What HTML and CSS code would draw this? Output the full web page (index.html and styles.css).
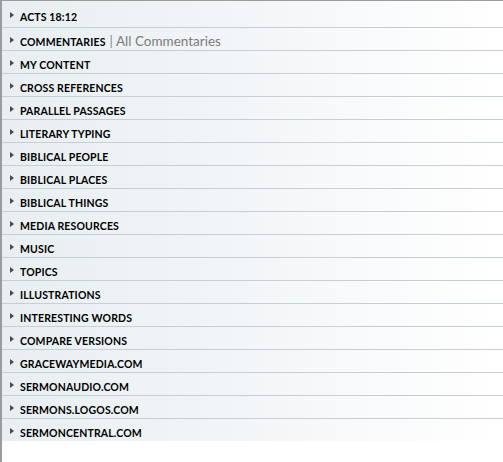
FILE: index.html
```html
<!DOCTYPE html>
<html>
<head>
<meta charset="utf-8">
<link rel="stylesheet" href="styles.css">
</head>
<body>
<div class="panel">
  <ul class="sections">
    <li class="row first"><span class="tri"></span><span class="label">ACTS 18:12</span></li>
    <li class="row"><span class="tri"></span><span class="label">COMMENTARIES</span><span class="sub"><span class="sep">|</span> All Commentaries</span></li>
    <li class="row"><span class="tri"></span><span class="label">MY CONTENT</span></li>
    <li class="row"><span class="tri"></span><span class="label">CROSS REFERENCES</span></li>
    <li class="row"><span class="tri"></span><span class="label">PARALLEL PASSAGES</span></li>
    <li class="row"><span class="tri"></span><span class="label">LITERARY TYPING</span></li>
    <li class="row"><span class="tri"></span><span class="label">BIBLICAL PEOPLE</span></li>
    <li class="row"><span class="tri"></span><span class="label">BIBLICAL PLACES</span></li>
    <li class="row"><span class="tri"></span><span class="label">BIBLICAL THINGS</span></li>
    <li class="row"><span class="tri"></span><span class="label">MEDIA RESOURCES</span></li>
    <li class="row"><span class="tri"></span><span class="label">MUSIC</span></li>
    <li class="row"><span class="tri"></span><span class="label">TOPICS</span></li>
    <li class="row"><span class="tri"></span><span class="label">ILLUSTRATIONS</span></li>
    <li class="row"><span class="tri"></span><span class="label">INTERESTING WORDS</span></li>
    <li class="row"><span class="tri"></span><span class="label">COMPARE VERSIONS</span></li>
    <li class="row"><span class="tri"></span><span class="label">GRACEWAYMEDIA.COM</span></li>
    <li class="row"><span class="tri"></span><span class="label">SERMONAUDIO.COM</span></li>
    <li class="row"><span class="tri"></span><span class="label">SERMONS.LOGOS.COM</span></li>
    <li class="row"><span class="tri"></span><span class="label">SERMONCENTRAL.COM</span></li>
  </ul>
</div>
</body>
</html>
```
FILE: styles.css
```css
html, body {
  margin: 0;
  padding: 0;
  background: #ffffff;
}
.panel {
  width: 501px;
  height: 461px;
  border-left: 2px solid #9c9c9c;
  border-top: 1px solid #9c9c9c;
  background: #ffffff;
}
.sections {
  list-style: none;
  margin: 0;
  padding: 0;
  background: linear-gradient(to right, #e8eef1 0%, #f3f6f8 50%, #ffffff 100%);
}
.row {
  display: flex;
  align-items: flex-start;
  height: 22px;
  box-sizing: content-box;
  border-bottom: 1px solid #c6d0d4;
  padding-left: 8px;
  font-family: Lato, "Open Sans", sans-serif;
}
.row:last-child {
  border-bottom: none;
}
.row.first {
  height: 26px;
}
.tri {
  width: 0;
  height: 0;
  margin-top: 9px;
  margin-right: 6px;
  border-left: 4px solid #4a4a4a;
  border-top: 3px solid transparent;
  border-bottom: 3px solid transparent;
}
.row.first .tri {
  margin-top: 11px;
}
.label {
  font-weight: 700;
  font-size: 10.5px;
  letter-spacing: 0.15px;
  color: #000000;
  line-height: 17px;
  padding-top: 6px;
}
.row.first .label {
  padding-top: 8px;
}
.sub {
  font-size: 13.5px;
  color: #7b7b7b;
  line-height: 17px;
  padding-top: 5px;
  margin-left: 4px;
}
.sep {
  color: #8a8a8a;
}
```
